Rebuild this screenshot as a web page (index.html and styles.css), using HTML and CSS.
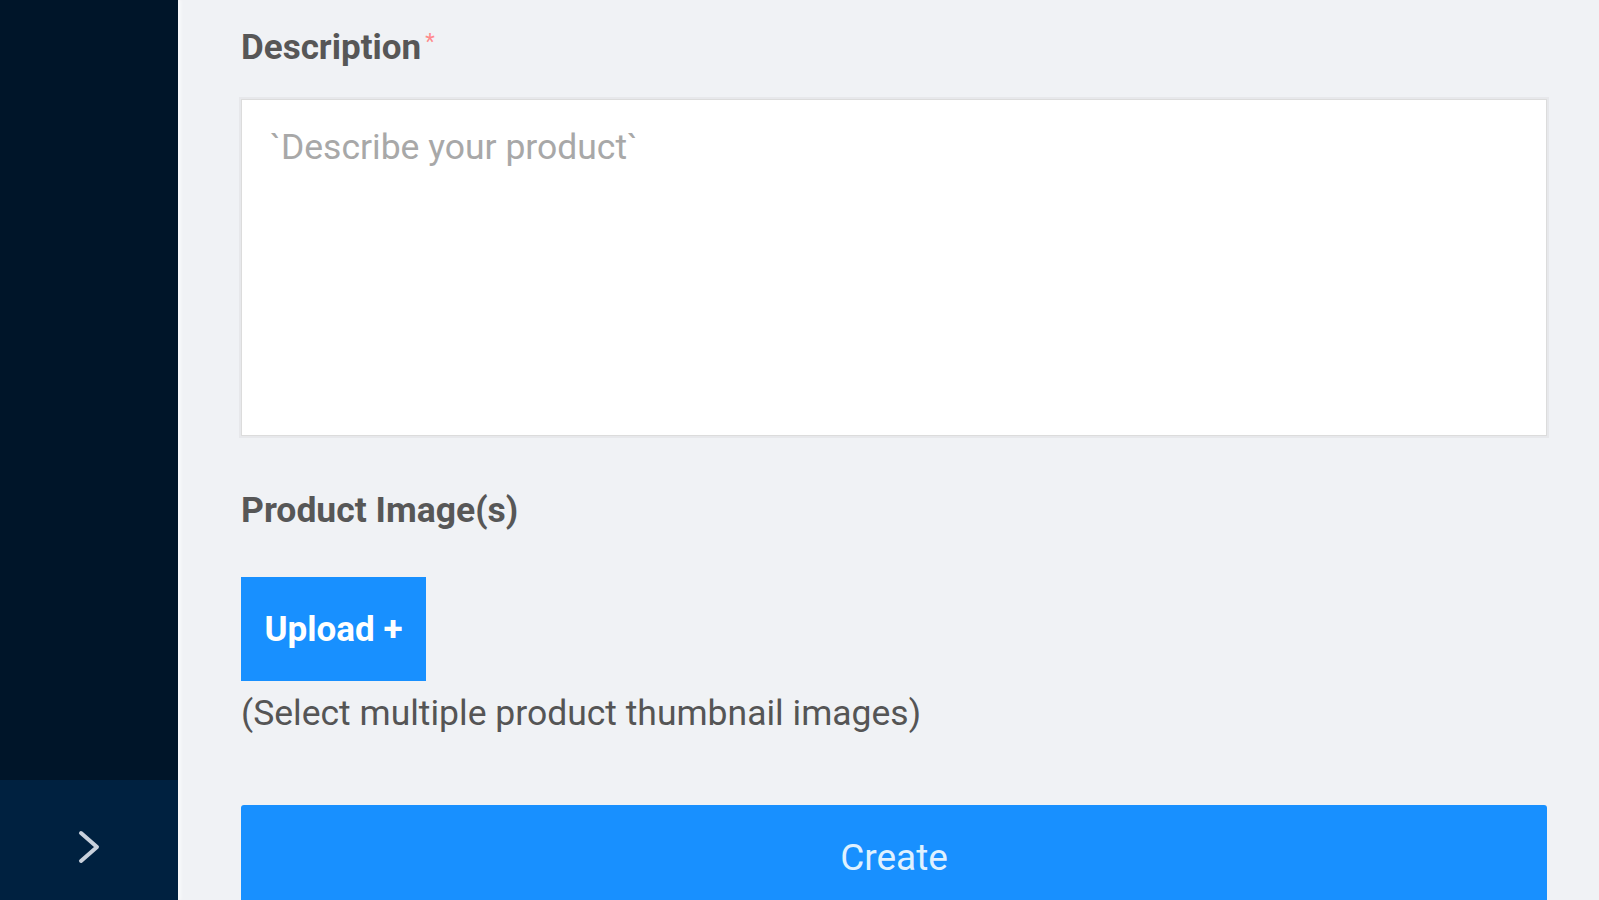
FILE: index.html
```html
<!DOCTYPE html>
<html lang="en">
<head>
<meta charset="utf-8">
<title>Create product</title>
<link rel="stylesheet" href="styles.css">
</head>
<body>
<div class="layout">
  <aside class="sider">
    <div class="sider-menu"></div>
    <div class="sider-trigger">
      <svg class="chevron" width="24" height="34" viewBox="0 0 24 34" aria-hidden="true">
        <polyline points="4,3 20,17 4,31" fill="none" stroke="#c9d1dc" stroke-width="4" stroke-linecap="round" stroke-linejoin="round"/>
      </svg>
    </div>
  </aside>
  <main class="content">
    <form class="form">
      <label class="label label-desc" for="desc">Description<span class="req">*</span></label>
      <textarea id="desc" class="textarea" placeholder="`Describe your product`"></textarea>
      <div class="label label-images">Product Image(s)</div>
      <div class="upload-row">
        <button type="button" class="btn-upload">Upload +</button>
      </div>
      <div class="hint">(Select multiple product thumbnail images)</div>
      <button type="button" class="btn-create">Create</button>
    </form>
  </main>
</div>
</body>
</html>
```

FILE: styles.css
```css
* { box-sizing: border-box; }

html, body {
  margin: 0;
  padding: 0;
  height: 900px;
  overflow: hidden;
  background: #f0f2f5;
  font-family: Roboto, "Liberation Sans", Arial, sans-serif;
}

.layout {
  display: flex;
  height: 900px;
}

.sider {
  width: 178px;
  flex: 0 0 178px;
  display: flex;
  flex-direction: column;
  background: #001529;
  box-shadow: 3px 0 3px rgba(255, 255, 255, 0.6);
  position: relative;
  z-index: 1;
}

.sider-menu {
  flex: 1;
}

.sider-trigger {
  height: 120px;
  background: #002140;
  display: flex;
  align-items: center;
  justify-content: center;
  padding-top: 14px;
}

.content {
  flex: 1;
  padding: 0 52px 0 63px;
  overflow: hidden;
}

.form {
  display: flex;
  flex-direction: column;
  align-items: stretch;
}

.label {
  color: #575757;
  font-weight: 700;
  font-size: 35px;
  line-height: 42px;
}

.label-desc {
  margin-top: 27px;
}

.req {
  color: #ff8a8c;
  font-weight: 400;
  font-size: 22px;
  vertical-align: top;
  line-height: 22px;
  margin-left: 4px;
  position: relative;
  top: 4px;
}

.textarea {
  margin-top: 30px;
  height: 337px;
  width: 100%;
  resize: none;
  border: 1px solid #dcdcdc;
  box-shadow: 0 0 0 2px #e7e8eb;
  background: #fff;
  padding: 26px 28px;
  font-family: Roboto, "Liberation Sans", Arial, sans-serif;
  font-size: 35.5px;
  line-height: 42px;
  color: #333;
  outline: none;
}

.textarea::placeholder {
  color: #a8a8a8;
}

.label-images {
  margin-top: 54px;
  font-size: 35.5px;
  line-height: 40px;
}

.upload-row {
  margin-top: 47px;
  display: flex;
}

.btn-upload {
  width: 185px;
  height: 104px;
  border: none;
  background: #1890ff;
  color: #fff;
  font-family: Roboto, "Liberation Sans", Arial, sans-serif;
  font-weight: 700;
  font-size: 35px;
  padding: 0;
}

.hint {
  margin-top: 12px;
  color: #555;
  font-size: 35.5px;
  line-height: 40px;
}

.btn-create {
  margin-top: 72px;
  height: 140px;
  border: none;
  border-radius: 3px 3px 0 0;
  background: #1890ff;
  color: #dff1ff;
  font-family: Roboto, "Liberation Sans", Arial, sans-serif;
  font-size: 37px;
  line-height: 42px;
  padding: 32px 0 0;
  display: flex;
  justify-content: center;
  align-items: flex-start;
}
```
